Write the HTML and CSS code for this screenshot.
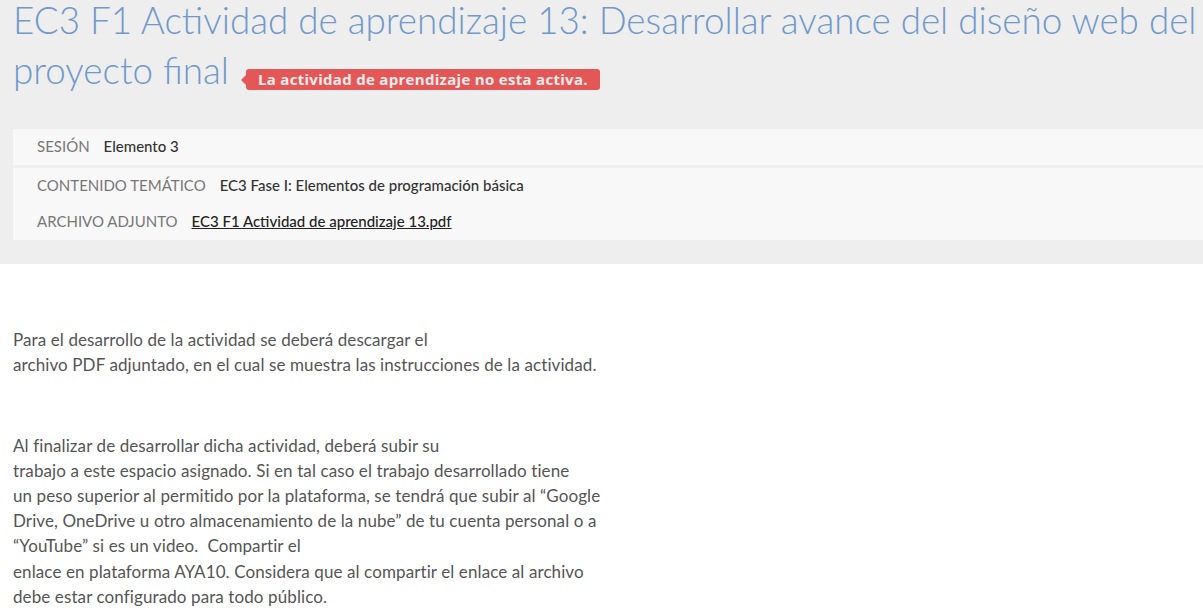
FILE: index.html
```html
<!DOCTYPE html>
<html lang="es">
<head>
<meta charset="utf-8">
<title>EC3 F1 Actividad de aprendizaje 13</title>
<link rel="stylesheet" href="styles.css">
</head>
<body>
<header class="head">
  <h1 class="title">EC3 F1 Actividad de aprendizaje 13: Desarrollar avance del diseño web del proyecto final <span class="badge">La actividad de aprendizaje no esta activa.</span></h1>
  <div class="info">
    <div class="info-box">
      <div class="row"><span class="label">SESIÓN</span><span class="value">Elemento 3</span></div>
    </div>
    <div class="info-box">
      <div class="row"><span class="label">CONTENIDO TEMÁTICO</span><span class="value">EC3 Fase I: Elementos de programación básica</span></div>
      <div class="row"><span class="label">ARCHIVO ADJUNTO</span><a class="value link" href="#">EC3 F1 Actividad de aprendizaje 13.pdf</a></div>
    </div>
  </div>
</header>
<main class="content">
  <p>Para el desarrollo de la actividad se deberá descargar el<br>archivo PDF adjuntado, en el cual se muestra las instrucciones de la actividad.</p>
  <p>&nbsp;</p>
  <p>Al finalizar de desarrollar dicha actividad, deberá subir su<br>trabajo a este espacio asignado. Si en tal caso el trabajo desarrollado tiene<br>un peso superior al permitido por la plataforma, se tendrá que subir al “Google<br>Drive, OneDrive u otro almacenamiento de la nube” de tu cuenta personal o a<br>“YouTube” si es un video.&nbsp; Compartir el<br>enlace en plataforma AYA10. Considera que al compartir el enlace al archivo<br>debe estar configurado para todo público.</p>
</main>
</body>
</html>
```
FILE: styles.css
```css
html, body {
  margin: 0;
  padding: 0;
  background: #ffffff;
  font-family: Lato, "Open Sans", sans-serif;
  overflow: hidden;
}

.head {
  background: #eeeeee;
  padding: 0 0 24px 13px;
}

.title {
  margin: -5px 0 0 0;
  font-family: Lato, sans-serif;
  font-weight: 300;
  font-size: 36.8px;
  line-height: 50px;
  color: #7199cc;
}

.badge {
  position: relative;
  display: inline-block;
  vertical-align: -1px;
  margin-left: 7px;
  padding: 0 12px 0 12px;
  height: 21px;
  line-height: 21px;
  background: #e45757;
  color: #fbecec;
  font-family: "Open Sans", sans-serif;
  font-weight: 700;
  font-size: 15px;
  letter-spacing: 0.3px;
  border-radius: 3px;
}

.badge::before {
  content: "";
  position: absolute;
  left: -5px;
  top: 6px;
  border-style: solid;
  border-width: 5px 5px 5px 0;
  border-color: transparent #e45757 transparent transparent;
}

.info {
  margin-top: 34px;
  display: flex;
  flex-direction: column;
  gap: 3px;
}

.info-box {
  background: #f8f8f8;
  padding: 0 0 0 24px;
  display: flex;
  flex-direction: column;
}

.row {
  display: flex;
  align-items: center;
  height: 36px;
  padding-bottom: 3px;
  box-sizing: border-box;
  font-size: 15px;
}

.info-box .row + .row {
  height: 36px;
}

.label {
  color: #777777;
  margin-right: 14px;
}

.value {
  color: #333333;
  font-weight: 500;
}

.link {
  color: #222222;
  text-decoration: underline;
}

.content {
  padding: 48px 13px 0 13px;
  color: #555555;
  font-size: 17px;
  letter-spacing: 0.1px;
  line-height: 25.2px;
}

.content p {
  margin: 15px 0;
}
```
